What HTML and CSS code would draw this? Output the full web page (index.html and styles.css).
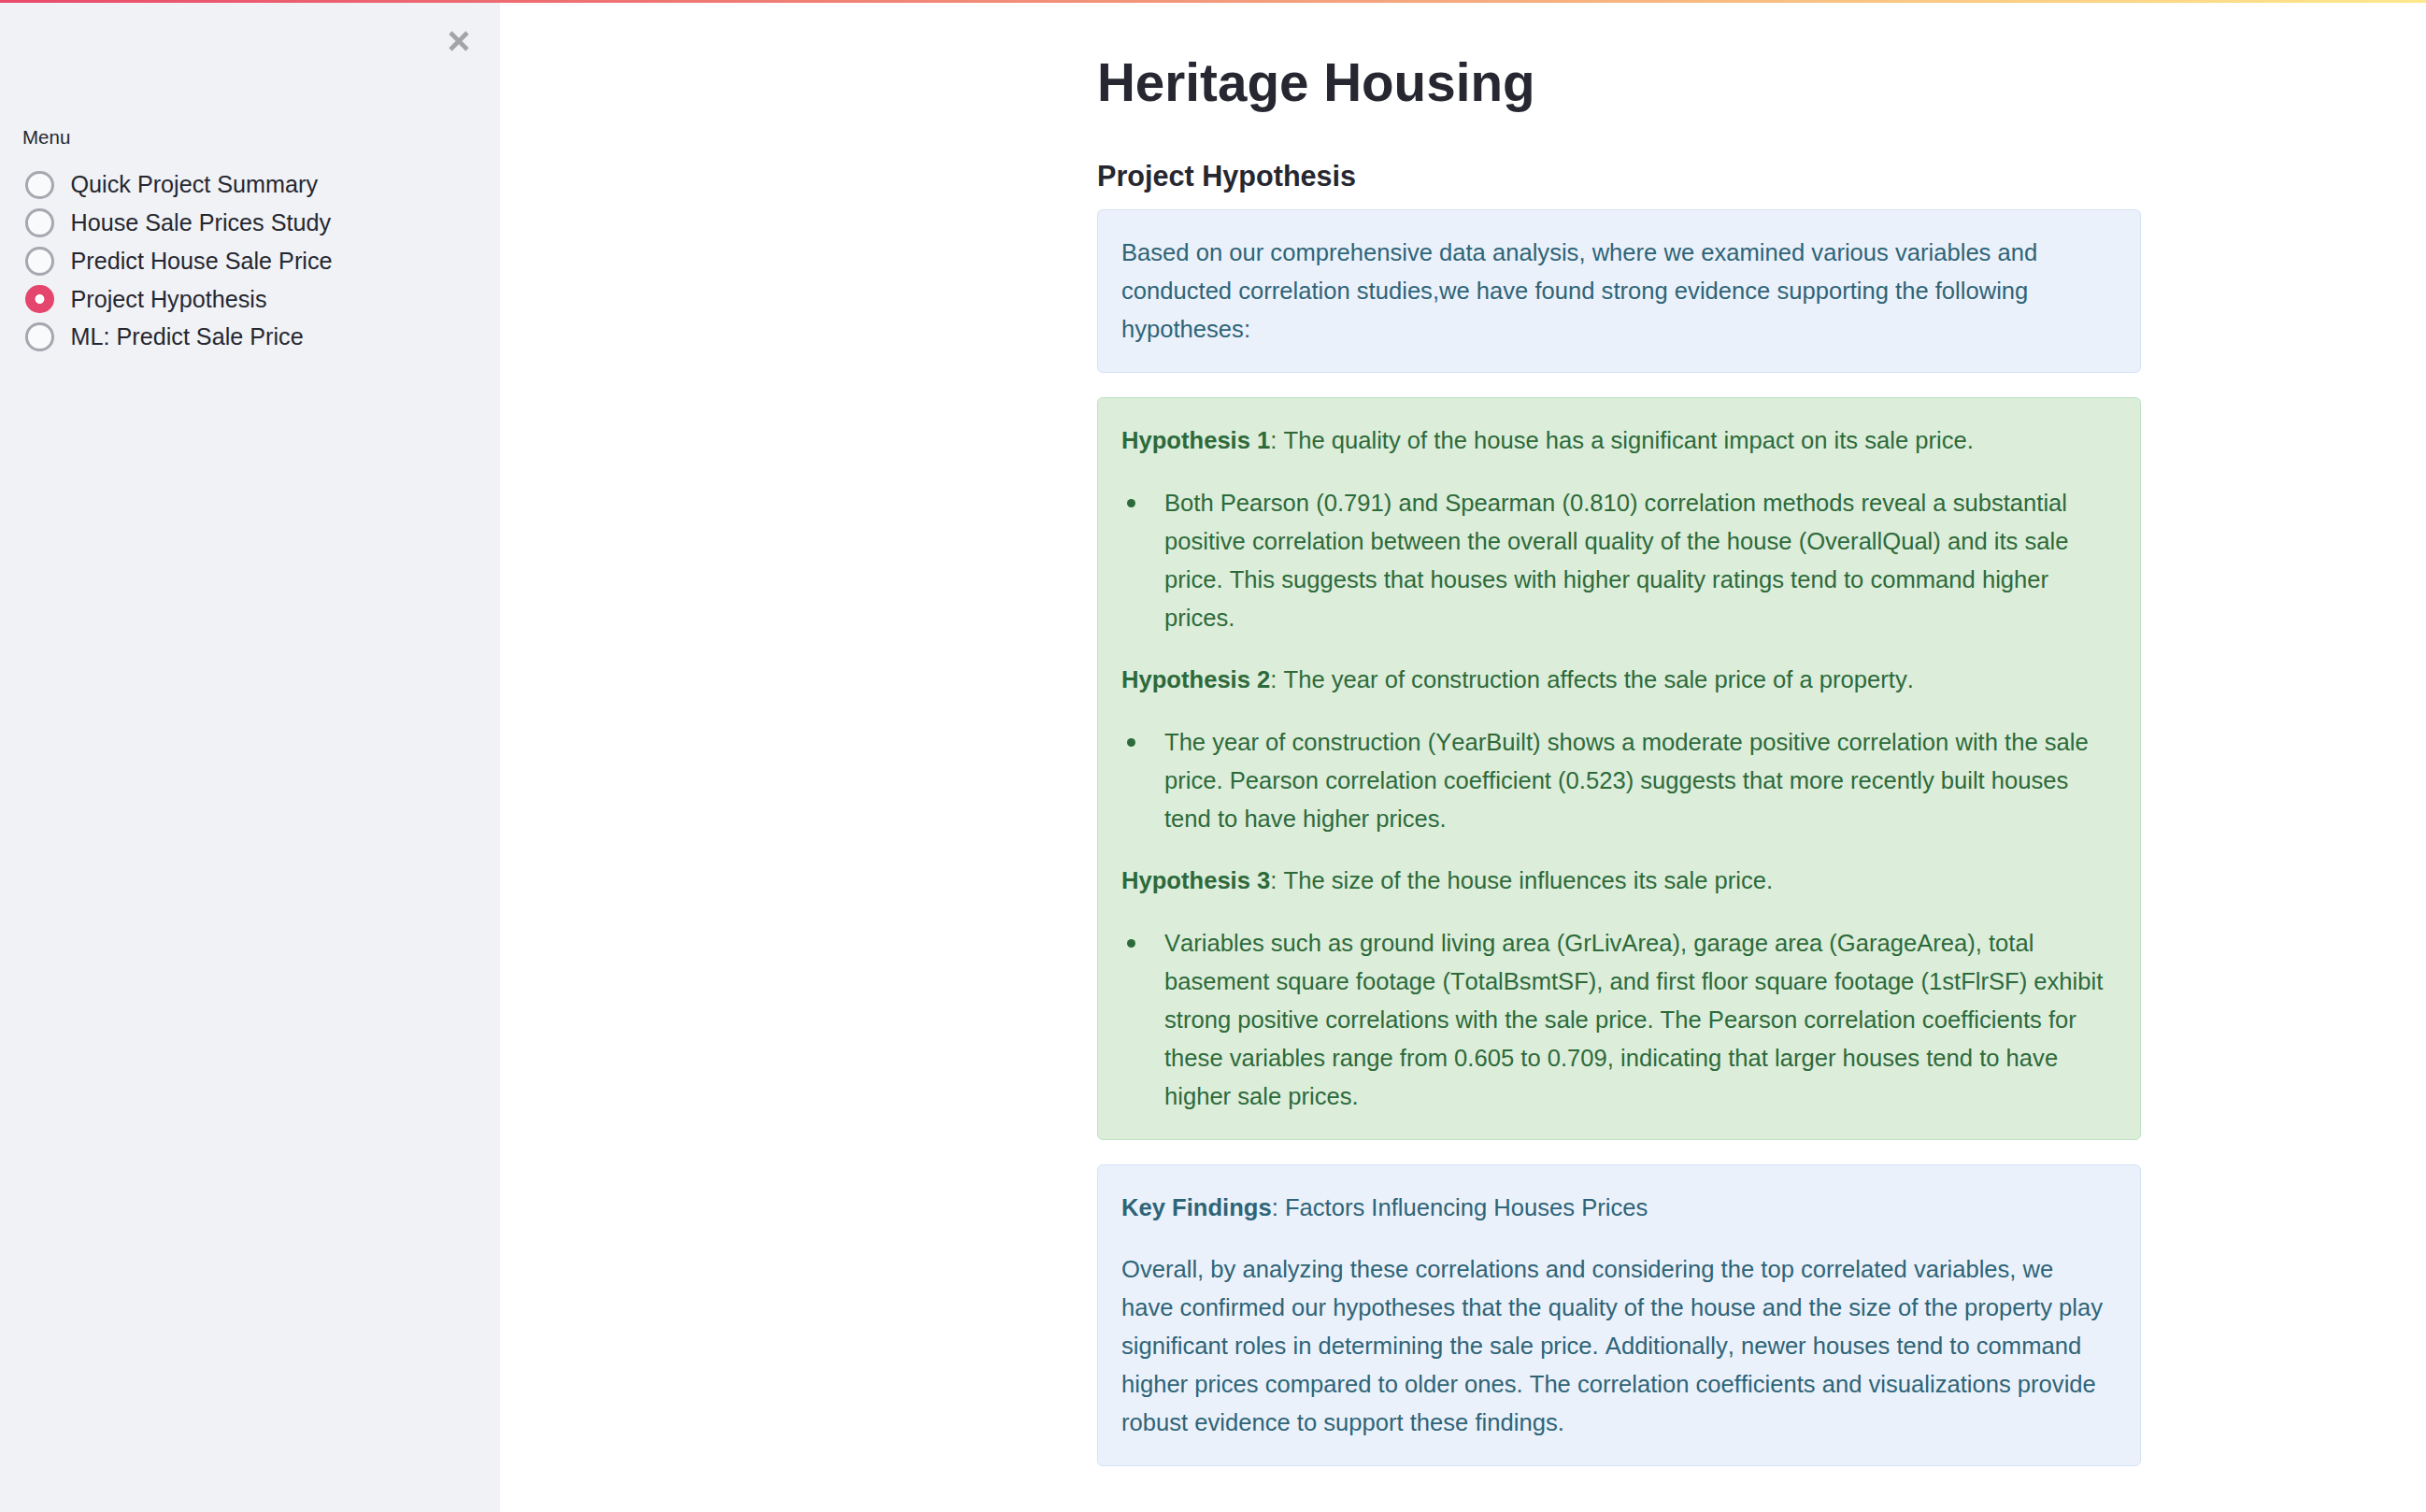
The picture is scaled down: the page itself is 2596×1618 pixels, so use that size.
FILE: index.html
```html
<!DOCTYPE html>
<html lang="en">
<head>
<meta charset="utf-8">
<title>Heritage Housing</title>
<link rel="stylesheet" href="styles.css">
</head>
<body>
<div class="decoration"></div>
<div class="app">
  <aside class="sidebar">
    <div class="sidebar-top">
      <button class="close-btn" aria-label="Close sidebar">
        <svg width="22" height="22" viewBox="0 0 22 22"><path d="M2 2 L20 20 M20 2 L2 20" stroke="currentColor" stroke-width="4.6" fill="none"/></svg>
      </button>
    </div>
    <div class="radio-group">
      <div class="radio-label">Menu</div>
      <label class="radio"><span class="radio-circle"></span><span>Quick Project Summary</span></label>
      <label class="radio"><span class="radio-circle"></span><span>House Sale Prices Study</span></label>
      <label class="radio"><span class="radio-circle"></span><span>Predict House Sale Price</span></label>
      <label class="radio checked"><span class="radio-circle"></span><span>Project Hypothesis</span></label>
      <label class="radio"><span class="radio-circle"></span><span>ML: Predict Sale Price</span></label>
    </div>
  </aside>
  <main class="main">
    <div class="block">
      <h1>Heritage Housing</h1>
      <h2>Project Hypothesis</h2>
      <div class="alert alert-info">
        <p>Based on our comprehensive data analysis, where we examined various variables and conducted correlation studies,we have found strong evidence supporting the following hypotheses:</p>
      </div>
      <div class="alert alert-success">
        <p><strong>Hypothesis 1</strong>: The quality of the house has a significant impact on its sale price.</p>
        <ul>
          <li>Both Pearson (0.791) and Spearman (0.810) correlation methods reveal a substantial positive correlation between the overall quality of the house (OverallQual) and its sale price. This suggests that houses with higher quality ratings tend to command higher prices.</li>
        </ul>
        <p><strong>Hypothesis 2</strong>: The year of construction affects the sale price of a property.</p>
        <ul>
          <li>The year of construction (YearBuilt) shows a moderate positive correlation with the sale price. Pearson correlation coefficient (0.523) suggests that more recently built houses tend to have higher prices.</li>
        </ul>
        <p><strong>Hypothesis 3</strong>: The size of the house influences its sale price.</p>
        <ul>
          <li>Variables such as ground living area (GrLivArea), garage area (GarageArea), total basement square footage (TotalBsmtSF), and first floor square footage (1stFlrSF) exhibit strong positive correlations with the sale price. The Pearson correlation coefficients for these variables range from 0.605 to 0.709, indicating that larger houses tend to have higher sale prices.</li>
        </ul>
      </div>
      <div class="alert alert-info">
        <p><strong>Key Findings</strong>: Factors Influencing Houses Prices</p>
        <p>Overall, by analyzing these correlations and considering the top correlated variables, we have confirmed our hypotheses that the quality of the house and the size of the property play significant roles in determining the sale price. Additionally, newer houses tend to command higher prices compared to older ones. The correlation coefficients and visualizations provide robust evidence to support these findings.</p>
      </div>
    </div>
  </main>
</div>
</body>
</html>
```

FILE: styles.css
```css
* {
  box-sizing: border-box;
}

html,
body {
  margin: 0;
  padding: 0;
}

body {
  font-family: "Liberation Sans", Arial, sans-serif;
  color: #262730;
  background: #ffffff;
  font-kerning: none;
  font-variant-ligatures: none;
}

.decoration {
  height: 3px;
  background: linear-gradient(90deg, #e94b6c, #fee98a);
}

.app {
  display: flex;
  min-height: calc(100vh - 3px);
}

/* Sidebar */
.sidebar {
  flex: 0 0 535px;
  width: 535px;
  background: #f0f2f6;
  padding: 30px 0 0 24px;
}

.sidebar-top {
  display: flex;
  justify-content: flex-end;
  padding-right: 33px;
}

.close-btn {
  display: block;
  width: 22px;
  height: 22px;
  padding: 0;
  border: 0;
  background: none;
  color: #a3a3a8;
  cursor: pointer;
}

.close-btn svg {
  display: block;
}

.radio-group {
  margin-top: 75.5px;
  display: flex;
  flex-direction: column;
}

.radio-label {
  font-size: 20.5px;
  line-height: 32.8px;
  color: #262730;
  margin-bottom: 14.3px;
}

.radio {
  display: flex;
  align-items: center;
  gap: 18px;
  height: 40.7px;
  padding-left: 3px;
  font-size: 25.2px;
  color: #262730;
}

.radio-circle {
  flex: none;
  width: 30.5px;
  height: 30.5px;
  border-radius: 50%;
  border: 3px solid #a6a8b0;
  background: #f9fafb;
}

.radio.checked .radio-circle {
  border-color: #e5466d;
  background: radial-gradient(circle, #ffffff 0 4.6px, #e5466d 5.3px);
}

/* Main */
.main {
  flex: 1;
  padding: 52px 0 0 639px;
}

.block {
  width: 1117px;
}

h1 {
  margin: 0;
  font-size: 56.6px;
  line-height: 68.4px;
  font-weight: 700;
  color: #262730;
}

h2 {
  margin: 46.3px 0 0;
  font-size: 30.6px;
  line-height: 37.2px;
  font-weight: 700;
  color: #262730;
}

.alert {
  border: 1px solid;
  border-radius: 6px;
  padding: 25px 35px 25px 25px;
  font-size: 25.6px;
  line-height: 41px;
}

h2 + .alert {
  margin-top: 17px;
}

.alert + .alert {
  margin-top: 26px;
}

.alert-info {
  background: #eaf1fb;
  border-color: #d5e3f5;
  color: #2f6477;
}

.alert-success {
  background: #dcedda;
  border-color: #bfe2c0;
  color: #2d6a3a;
}

.alert p {
  margin: 0 0 25.6px;
}

.alert ul {
  margin: 0 0 25.6px;
  padding-left: 46px;
  list-style: none;
}

.alert li::before {
  content: "";
  display: inline-block;
  width: 9px;
  height: 9px;
  border-radius: 50%;
  background: currentColor;
  margin-left: -40px;
  margin-right: 31px;
  vertical-align: 4px;
}

.alert > :last-child {
  margin-bottom: 0;
}

.alert strong {
  font-weight: 700;
}
```
